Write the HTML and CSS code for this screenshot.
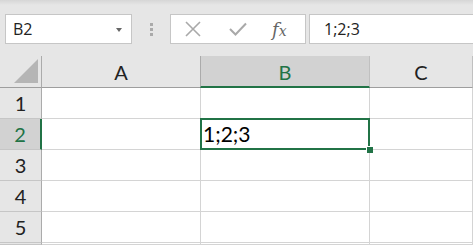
FILE: index.html
```html
<!DOCTYPE html>
<html lang="en">
<head>
    <meta charset="UTF-8">
    <title>Sheet</title>
    <link rel="stylesheet" href="styles.css">
</head>
<body>
    <div class="toolbar">
        <div class="name-box">
            <span>B2</span>
            <span class="caret"></span>
        </div>
        <div class="grip"><i></i><i></i><i></i></div>
        <div class="buttons">
            <svg class="btn" width="18" height="18" viewBox="0 0 18 18">
                <path d="M2 2 L16 16 M16 2 L2 16" stroke="#a9a9a9" stroke-width="1.6" fill="none"/>
            </svg>
            <svg class="btn" width="20" height="18" viewBox="0 0 20 18">
                <path d="M2 9 L7.5 14.5 L18 3.5" stroke="#a9a9a9" stroke-width="2" fill="none"/>
            </svg>
            <span class="fx">f<sub>x</sub></span>
        </div>
        <div class="formula">1;2;3</div>
    </div>

    <div class="sheet">
        <div class="corner"><span class="tri"></span></div>
        <div class="col-head">A</div>
        <div class="col-head active">B</div>
        <div class="col-head">C</div>

        <div class="row-head">1</div>
        <div class="cell"></div>
        <div class="cell"></div>
        <div class="cell"></div>

        <div class="row-head active">2</div>
        <div class="cell"></div>
        <div class="cell selected">1;2;3</div>
        <div class="cell"></div>

        <div class="row-head">3</div>
        <div class="cell"></div>
        <div class="cell"></div>
        <div class="cell"></div>

        <div class="row-head">4</div>
        <div class="cell"></div>
        <div class="cell"></div>
        <div class="cell"></div>

        <div class="row-head">5</div>
        <div class="cell"></div>
        <div class="cell"></div>
        <div class="cell"></div>

        <div class="row-head"></div>
        <div class="cell"></div>
        <div class="cell"></div>
        <div class="cell"></div>
    </div>
</body>
</html>
```

FILE: styles.css
```css
html, body {
    overflow: hidden;
}
body {
    margin: 0;
    width: 473px;
    height: 245px;
    background: #e6e6e6;
    font-family: Lato, "Liberation Sans", sans-serif;
}
.toolbar {
    height: 56px;
    box-sizing: border-box;
    padding: 14px 0 0 5px;
    display: flex;
    align-items: flex-start;
    background: linear-gradient(#d6d6d6, #e6e6e6 5px);
}
.name-box {
    width: 127px;
    height: 30px;
    box-sizing: border-box;
    border: 1px solid #c6c6c6;
    background: #fff;
    display: flex;
    align-items: center;
    justify-content: space-between;
    padding: 0 9px 0 7px;
    font-family: "Open Sans", "Liberation Sans", sans-serif;
    font-size: 16px;
    color: #222;
}
.caret {
    width: 0;
    height: 0;
    border-left: 3.5px solid transparent;
    border-right: 3.5px solid transparent;
    border-top: 4px solid #666;
    margin-top: 1px;
}
.grip {
    width: 38px;
    height: 30px;
    display: flex;
    flex-direction: column;
    align-items: center;
    justify-content: center;
    gap: 2px;
}
.grip i {
    width: 3px;
    height: 3px;
    background: #aaa;
}
.buttons {
    width: 136px;
    height: 30px;
    box-sizing: border-box;
    border: 1px solid #c6c6c6;
    background: #fff;
    display: flex;
    align-items: center;
    padding-left: 13px;
    gap: 26px;
}
.fx {
    font-family: "DejaVu Serif", "Liberation Serif", serif;
    font-style: italic;
    font-size: 18px;
    color: #666;
    margin-left: -2px;
}
.fx sub {
    font-size: 14px;
    vertical-align: 0;
}
.formula {
    flex: 1;
    height: 30px;
    box-sizing: border-box;
    margin-left: 3px;
    border: 1px solid #c6c6c6;
    border-right: none;
    background: #fff;
    padding-left: 14px;
    line-height: 28px;
    font-family: "Open Sans", "Liberation Sans", sans-serif;
    font-size: 16px;
    color: #222;
}
.sheet {
    display: grid;
    grid-template-columns: 42px 159px 169px 103px;
    grid-template-rows: 32px repeat(5, 31px) 2px;
    background: #fff;
}
.sheet > div {
    box-sizing: border-box;
}
.corner {
    background: #e6e6e6;
    border-right: 1px solid #ababab;
    border-bottom: 1px solid #9e9e9e;
    position: relative;
}
.tri {
    position: absolute;
    right: 3px;
    bottom: 4px;
    width: 0;
    height: 0;
    border-left: 24px solid transparent;
    border-bottom: 24px solid #b5b5b5;
}
.col-head {
    background: #e6e6e6;
    border-right: 1px solid #c0c0c0;
    border-bottom: 1px solid #9e9e9e;
    text-align: center;
    line-height: 32px;
    font-size: 20px;
    color: #222;
}
.col-head.active {
    background: #d2d2d2;
    color: #217346;
    border-bottom: 2px solid #217346;
    border-left: 1px solid #ababab;
    margin-left: -1px;
}
.row-head {
    background: #e6e6e6;
    border-right: 1px solid #ababab;
    border-bottom: 1px solid #c6c6c6;
    text-align: center;
    line-height: 31px;
    font-size: 20px;
    color: #222;
}
.row-head.active {
    background: #d2d2d2;
    color: #217346;
    border-right: 2px solid #217346;
}
.cell {
    border-right: 1px solid #d4d4d4;
    border-bottom: 1px solid #d4d4d4;
    font-size: 21px;
    line-height: 30px;
    color: #000;
    padding-left: 2px;
}
.selected {
    position: relative;
}
.selected::after {
    content: "";
    position: absolute;
    left: -1px;
    top: -1px;
    right: -1px;
    bottom: -1px;
    border: 2px solid #217346;
}
.selected::before {
    content: "";
    position: absolute;
    right: -4px;
    bottom: -4px;
    width: 6px;
    height: 6px;
    background: #217346;
    border-left: 1px solid #fff;
    border-top: 1px solid #fff;
    z-index: 1;
}
```
